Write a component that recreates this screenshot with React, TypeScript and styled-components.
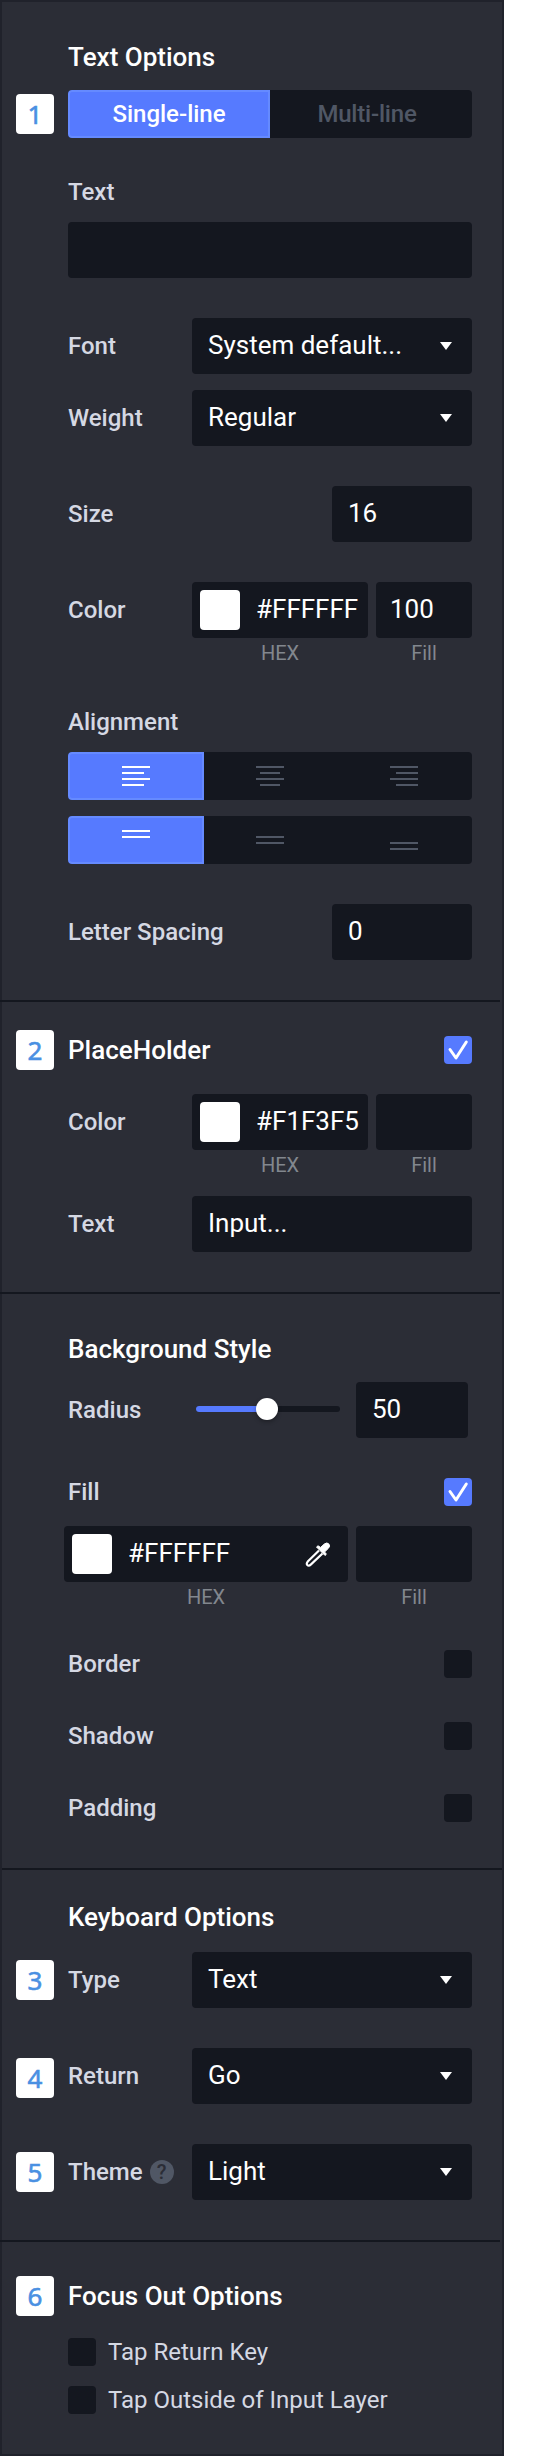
import React from "react";
import styled, { createGlobalStyle, css } from "styled-components";

const c = {
  panel: "#2b2d36",
  edge: "#20222b",
  well: "#14171f",
  blue: "#567aff",
  blueEdge: "#658aff",
  label: "#d5d8e3",
  muted: "#505765",
  caption: "#82878e",
  badge: "#4a90e2",
};

const Global = createGlobalStyle`
  *, *::before, *::after { box-sizing: border-box; }
  body { margin: 0; background: #fff; font-family: Roboto, "Liberation Sans", sans-serif; }
`;

const Panel = styled.main`
  width: 504px;
  height: 2456px;
  background: ${c.panel};
  border: 2px solid ${c.edge};
`;

const Section = styled.section<{ $height: number; $top: number; $inset?: boolean }>`
  height: ${(p) => p.$height}px;
  width: 500px;
  margin-left: ${(p) => (p.$inset ? 0 : -2)}px;
  padding: ${(p) => p.$top}px 0 0 ${(p) => (p.$inset ? 14 : 16)}px;
  border-bottom: 2px solid ${c.well};
  &:last-child { border-bottom: 0; }
`;

const Row = styled.div<{ $h: number; $mt?: number }>`
  display: grid;
  grid-template-columns: 52px 404px;
  align-items: center;
  height: ${(p) => p.$h}px;
  margin-top: ${(p) => p.$mt ?? 0}px;
`;

const Body = styled.div`
  grid-column: 2;
  display: flex;
  align-items: center;
  justify-content: space-between;
`;

const Badge = styled.span<{ $dy?: number }>`
  width: 38px;
  height: 40px;
  margin-top: ${(p) => (p.$dy ?? 0) * 2}px;
  border-radius: 4px;
  background: #fff;
  color: ${c.badge};
  font: 400 26px/41px "Noto Sans", sans-serif;
  -webkit-text-stroke: 0.6px ${c.badge};
  text-align: center;
`;

const Title = styled.h2`
  margin: 0;
  color: #fff;
  font-size: 26px;
  line-height: 30px;
  font-weight: 500;
`;

const Label = styled.span<{ $regular?: boolean }>`
  display: flex;
  align-items: center;
  color: ${c.label};
  font-size: 24px;
  line-height: 28px;
  font-weight: ${(p) => (p.$regular ? 400 : 500)};
`;

const Field = styled.div<{ $w: number; $pl?: number }>`
  display: flex;
  align-items: center;
  flex: none;
  width: ${(p) => p.$w}px;
  height: 56px;
  padding: 0 0 2px ${(p) => p.$pl ?? 16}px;
  border-radius: 4px;
  background: ${c.well};
  color: #fff;
  font-size: 26px;
  line-height: 30px;
  white-space: nowrap;
`;

const Arrow = styled.i`
  margin: 2px 20px 0 auto;
  border: solid transparent;
  border-width: 8px 6px 0;
  border-top-color: #fff;
`;

const Segments = styled.div<{ $cols: string }>`
  display: grid;
  grid-template-columns: ${(p) => p.$cols};
  flex: 1;
  height: 48px;
  border-radius: 4px;
  background: ${c.well};
`;

const Segment = styled.button<{ $on?: boolean }>`
  display: flex;
  align-items: center;
  justify-content: center;
  padding: 0;
  border: 2px solid transparent;
  background: none;
  color: ${c.muted};
  font: 500 24px/28px Roboto, sans-serif;
  ${(p) => p.$on && css`
    color: #fff;
    background: ${c.blue};
    border-color: ${c.blueEdge};
    border-radius: 4px 0 0 4px;
  `}
`;

const QuietSegment = styled(Segment)`
  padding-right: 8px;
  letter-spacing: -0.2px;
`;

const Swatch = styled.i`
  flex: none;
  width: 40px;
  height: 40px;
  margin: 2px 16px 0 0;
  border-radius: 4px;
  background: #fff;
`;

const Captions = styled.div<{ $offset: number; $cols: string }>`
  display: grid;
  grid-template-columns: ${(p) => p.$cols};
  column-gap: 8px;
  height: 24px;
  margin: 2px 0 0 ${(p) => p.$offset}px;
  color: ${c.caption};
  font-size: 20px;
  line-height: 26px;
  text-align: center;
`;

const Box = styled.span<{ $on?: boolean }>`
  display: flex;
  flex: none;
  width: 28px;
  height: 28px;
  border-radius: 4px;
  background: ${(p) => (p.$on ? c.blue : c.well)};
`;

const Pair = styled.div`
  display: flex;
  gap: 8px;
`;

const WidePair = styled(Pair)`
  grid-column: 2;
  margin-left: -4px;
`;

const CheckLine = styled(Body)`
  justify-content: flex-start;
  gap: 12px;
`;

const Track = styled.div`
  display: flex;
  align-items: center;
  width: 144px;
  height: 6px;
  margin: 0 16px 2px auto;
  border-radius: 3px;
  background: ${c.well};
`;

const Progress = styled.div`
  width: 66px;
  height: 6px;
  border-radius: 3px 0 0 3px;
  background: ${c.blue};
`;

const Thumb = styled.div`
  flex: none;
  width: 22px;
  height: 22px;
  margin-left: -6px;
  border-radius: 50%;
  background: #fff;
  box-shadow: 0 2px 4px rgba(0, 0, 0, 0.3);
`;

const RadiusBody = styled(Body)`
  padding-right: 4px;
`;

const Help = styled.span`
  width: 24px;
  height: 24px;
  margin-left: 7px;
  border-radius: 50%;
  background: ${c.muted};
  color: ${c.panel};
  font-size: 20px;
  font-weight: 500;
  line-height: 25px;
  text-align: center;
`;

const Pipette = styled.svg`
  margin: 2px 17px 0 auto;
`;

function Check({ on }: { on?: boolean }) {
  return (
    <Box $on={on}>
      {on && (
        <svg width="28" height="28" viewBox="0 0 28 28" fill="none" stroke="#fff" strokeWidth="3" strokeLinecap="round" strokeLinejoin="round">
          <path d="M6 13.5 L12 22 L22.3 6" />
        </svg>
      )}
    </Box>
  );
}

function Lines({ rows, color }: { rows: number[][]; color: string }) {
  return (
    <svg width="28" height="20" viewBox="0 0 28 20" fill={color} shapeRendering="crispEdges">
      {rows.map(([x, y, w]) => <rect key={y} x={x} y={y} width={w} height="2" />)}
    </svg>
  );
}

function ColorRow({ hex, fill, mt }: { hex: string; fill?: string; mt: number }) {
  return (
    <>
      <Row $h={56} $mt={mt}>
        <Body>
          <Label>Color</Label>
          <Pair>
            <Field $w={176} $pl={8}><Swatch />{hex}</Field>
            <Field $w={96} $pl={14}>{fill}</Field>
          </Pair>
        </Body>
      </Row>
      <Captions $offset={176} $cols="176px 96px">
        <span>HEX</span><span>Fill</span>
      </Captions>
    </>
  );
}

function SelectRow({ label, value, mt, badge, dy, help }: { label: string; value: string; mt: number; badge?: string; dy?: number; help?: boolean }) {
  return (
    <Row $h={56} $mt={mt}>
      {badge && <Badge $dy={dy}>{badge}</Badge>}
      <Body>
        <Label>{label}{help && <Help>?</Help>}</Label>
        <Field $w={280}>{value}<Arrow /></Field>
      </Body>
    </Row>
  );
}

function CheckRow({ label, mt, on }: { label: string; mt: number; on?: boolean }) {
  return (
    <Row $h={28} $mt={mt}>
      <Body><Label>{label}</Label><Check on={on} /></Body>
    </Row>
  );
}

function NumberRow({ label, value, mt }: { label: string; value: string; mt: number }) {
  return (
    <Row $h={56} $mt={mt}>
      <Body><Label>{label}</Label><Field $w={140}>{value}</Field></Body>
    </Row>
  );
}

const horizontal = [
  [[0, 0, 28], [0, 6, 22], [0, 12, 28], [0, 18, 22]],
  [[0, 0, 28], [4, 6, 20], [0, 12, 28], [4, 18, 20]],
  [[0, 0, 28], [6, 6, 22], [0, 12, 28], [6, 18, 22]],
];
const vertical = [
  [[0, 0, 28], [0, 6, 28]],
  [[0, 6, 28], [0, 12, 28]],
  [[0, 12, 28], [0, 18, 28]],
];

export default function App() {
  return (
    <>
      <Global />
      <Panel>
        <Section $height={1000} $top={40}>
          <Row $h={30}><Body><Title>Text Options</Title></Body></Row>
          <Row $h={48} $mt={18}>
            <Badge>1</Badge>
            <Body>
              <Segments $cols="1fr 1fr">
                <Segment $on>Single-line</Segment>
                <QuietSegment>Multi-line</QuietSegment>
              </Segments>
            </Body>
          </Row>
          <Row $h={28} $mt={40}><Body><Label>Text</Label></Body></Row>
          <Row $h={56} $mt={16}><Body><Field $w={404} /></Body></Row>
          <SelectRow label="Font" value="System default..." mt={40} />
          <SelectRow label="Weight" value="Regular" mt={16} />
          <NumberRow label="Size" value="16" mt={40} />
          <ColorRow hex="#FFFFFF" fill="100" mt={40} />
          <Row $h={28} $mt={44}><Body><Label>Alignment</Label></Body></Row>
          {[horizontal, vertical].map((group, g) => (
            <Row $h={48} $mt={16} key={g}>
              <Body>
                <Segments $cols="136px 132px 136px">
                  {group.map((rows, i) => (
                    <Segment $on={i === 0} key={i}><Lines rows={rows} color={i === 0 ? "#fff" : c.muted} /></Segment>
                  ))}
                </Segments>
              </Body>
            </Row>
          ))}
          <NumberRow label="Letter Spacing" value="0" mt={40} />
        </Section>

        <Section $height={292} $top={28}>
          <Row $h={40}>
            <Badge>2</Badge>
            <Body><Title>PlaceHolder</Title><Check on /></Body>
          </Row>
          <ColorRow hex="#F1F3F5" mt={24} />
          <Row $h={56} $mt={20}>
            <Body><Label>Text</Label><Field $w={280}>Input...</Field></Body>
          </Row>
        </Section>

        <Section $height={576} $top={40} $inset>
          <Row $h={30}><Body><Title>Background Style</Title></Body></Row>
          <Row $h={56} $mt={18}>
            <RadiusBody>
              <Label>Radius</Label>
              <Track><Progress /><Thumb /></Track>
              <Field $w={112}>50</Field>
            </RadiusBody>
          </Row>
          <CheckRow label="Fill" mt={40} on />
          <Row $h={56} $mt={20}>
            <WidePair>
              <Field $w={284} $pl={8}>
                <Swatch />#FFFFFF
                <Pipette width="26" height="25" viewBox="0 0 26 25">
                  <path d="M14 8.5 L3 19.3 Q1 21.6 2.3 23 Q3.8 24.4 6 22.4 L17.5 11.5" fill="none" stroke="#fff" strokeWidth="2.2" />
                  <path d="M11.5 5 L13 3.8 L15.6 5.4 L19.3 2 Q22 0 23.8 1.9 Q25.6 4 23.4 6.3 L19.6 10 L21.4 12.2 L20 13.5 Z" fill="#fff" stroke="#fff" strokeLinejoin="round" />
                </Pipette>
              </Field>
              <Field $w={116} />
            </WidePair>
          </Row>
          <Captions $offset={48} $cols="284px 116px">
            <span>HEX</span><span>Fill</span>
          </Captions>
          <CheckRow label="Border" mt={42} />
          <CheckRow label="Shadow" mt={44} />
          <CheckRow label="Padding" mt={44} />
        </Section>

        <Section $height={372} $top={32}>
          <Row $h={30}><Body><Title>Keyboard Options</Title></Body></Row>
          <SelectRow badge="3" label="Type" value="Text" mt={20} />
          <SelectRow badge="4" label="Return" value="Go" mt={40} dy={2} />
          <SelectRow badge="5" label="Theme" value="Light" mt={40} help />
        </Section>

        <Section $height={212} $top={34}>
          <Row $h={40}>
            <Badge>6</Badge>
            <Body><Title>Focus Out Options</Title></Body>
          </Row>
          <Row $h={28} $mt={22}><CheckLine><Check /><Label $regular>Tap Return Key</Label></CheckLine></Row>
          <Row $h={28} $mt={20}><CheckLine><Check /><Label $regular>Tap Outside of Input Layer</Label></CheckLine></Row>
        </Section>
      </Panel>
    </>
  );
}
